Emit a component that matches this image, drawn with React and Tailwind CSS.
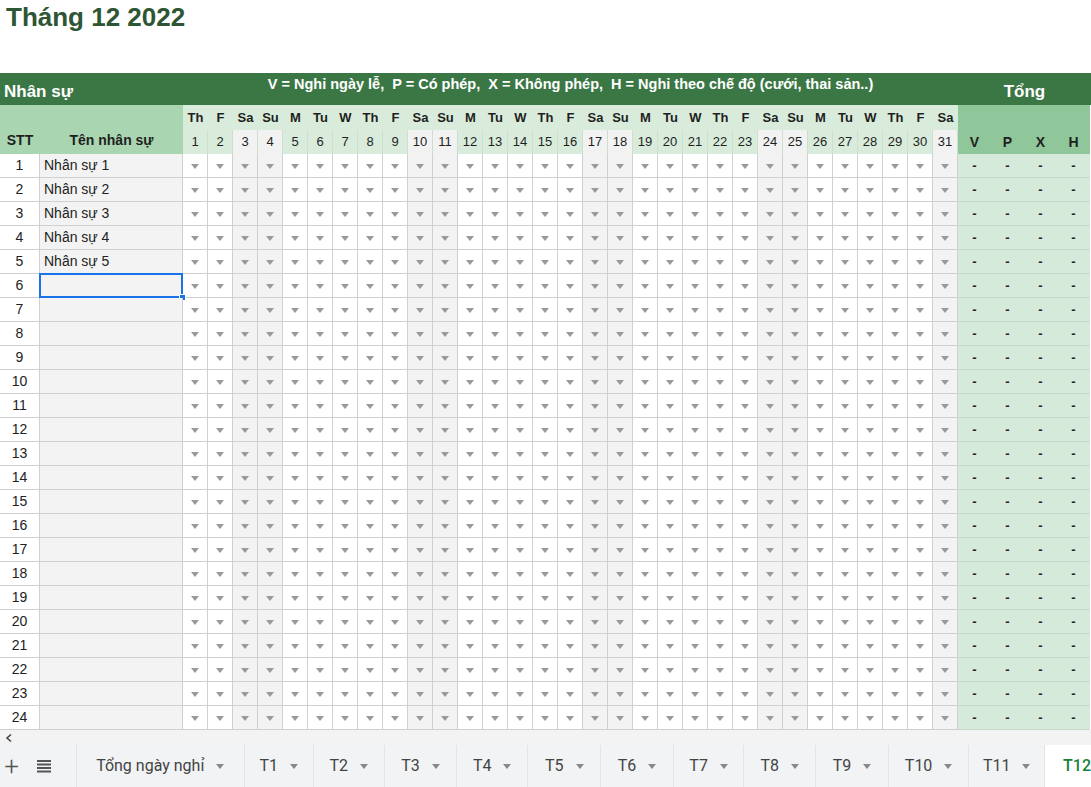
import React from 'react';

// Cấu hình lưới: STT | Tên | 31 ngày | V P X H
const GRID = 'grid grid-cols-[40px_143px_repeat(31,25px)_repeat(4,33px)]';

const DAY_NAMES = ['Th', 'F', 'Sa', 'Su', 'M', 'Tu', 'W'];
const days = Array.from({ length: 31 }, (_, i) => ({
    num: i + 1,
    name: DAY_NAMES[i % 7],
    weekend: i % 7 === 2 || i % 7 === 3,
}));

const names = ['Nhân sự 1', 'Nhân sự 2', 'Nhân sự 3', 'Nhân sự 4', 'Nhân sự 5'];

const tabs = [
    { label: 'Tổng ngày nghỉ', w: 'w-[169px]' },
    { label: 'T1', w: 'w-[69px]' },
    { label: 'T2', w: 'w-[72px]' },
    { label: 'T3', w: 'w-[72px]' },
    { label: 'T4', w: 'w-[72px]' },
    { label: 'T5', w: 'w-[73px]' },
    { label: 'T6', w: 'w-[73px]' },
    { label: 'T7', w: 'w-[71px]' },
    { label: 'T8', w: 'w-[72px]' },
    { label: 'T9', w: 'w-[73px]' },
    { label: 'T10', w: 'w-[81px]' },
    { label: 'T11', w: 'w-[76px]' },
];

const Arrow = ({ className = 'border-t-[#9a9a9a]' }) => (
    <span className={`block w-0 h-0 border-x-[4px] border-x-transparent border-t-[5px] ${className}`} />
);

const Header = () => (
    <div>
        {/* Hàng tiêu đề đậm */}
        <div className="flex h-[32px] bg-[#3b7745] text-white font-bold">
            <div className="w-[183px] flex items-end pl-[4px] pb-[1px] text-[17px]">Nhân sự</div>
            <div className="w-[775px] flex justify-center pt-[1px] text-[14.5px] whitespace-pre">
                V = Nghỉ ngày lễ,  P = Có phép,  X = Không phép,  H = Nghỉ theo chế độ (cưới, thai sản..)
            </div>
            <div className="flex-1 flex items-end justify-center pb-[1px] text-[17px]">Tổng</div>
        </div>

        <div className={`${GRID} grid-rows-[25px_24px] font-bold text-[14px] text-[#1f1f1f]`}>
            <div className="col-span-2 row-span-2 bg-[#a9d5b1] flex items-end pb-[3px]">
                <div className="w-[40px] text-center">STT</div>
                <div className="flex-1 text-center">Tên nhân sự</div>
            </div>
            {days.map((d) => (
                <div key={'n' + d.num} className="bg-[#d9ecdb] flex items-center justify-center text-[13px]">
                    {d.name}
                </div>
            ))}
            <div className="col-span-4 bg-[#8fc69a]" />
            {days.map((d) => (
                <div
                    key={'d' + d.num}
                    className={`flex items-center justify-center font-normal text-[13px] border-r border-[#cddfcd] ${d.weekend ? 'bg-[#f2f2f2]' : 'bg-[#d9ecdb]'}`}
                >
                    {d.num}
                </div>
            ))}
            {['V', 'P', 'X', 'H'].map((t) => (
                <div key={t} className="bg-[#8fc69a] flex items-center justify-center">{t}</div>
            ))}
        </div>
    </div>
);

const Row = ({ idx }) => {
    const selected = idx === 6;
    return (
        <div className={`${GRID} h-[24px] text-[14px] text-[#222]`}>
            <div className="flex items-center justify-center border-r border-b border-[#d0d0d0] bg-white">{idx}</div>
            <div className="relative flex items-center pl-[4px] border-r border-b border-[#d0d0d0] bg-[#f3f3f3]">
                {names[idx - 1] || ''}
                {selected && (
                    <>
                        <div className="absolute -left-[1px] -top-[1px] w-[144px] h-[25px] border-2 border-[#1a73e8]" />
                        <div className="absolute -right-[4px] -bottom-[4px] w-[7px] h-[7px] bg-[#1a73e8] border border-white" />
                    </>
                )}
            </div>
            {days.map((d) => (
                <div
                    key={d.num}
                    className={`flex items-center justify-center pt-[1px] border-r border-b border-[#d0d0d0] ${d.weekend ? 'bg-[#f3f3f3]' : 'bg-white'}`}
                >
                    <Arrow />
                </div>
            ))}
            {['V', 'P', 'X', 'H'].map((t) => (
                <div key={t} className="flex items-center justify-center bg-[#d5eada] border-b border-[#c4dbc7] text-[13px] font-bold">
                    -
                </div>
            ))}
        </div>
    );
};

const TabBar = () => (
    <div className="flex h-[42px] bg-[#f1f3f4] text-[16px] text-[#444] font-['Roboto',sans-serif]">
        <div className="w-[77px] flex items-center border-r border-[#e2e4e6]">
            <div className="w-[23px] flex justify-center text-[26px] font-light text-[#555] leading-none">+</div>
            <div className="w-[42px] flex justify-center">
                <svg width="16" height="14" viewBox="0 0 16 14" fill="#555">
                    <rect x="1" y="1" width="14" height="2" />
                    <rect x="1" y="4.5" width="14" height="2" />
                    <rect x="1" y="8" width="14" height="2" />
                    <rect x="1" y="11.5" width="14" height="2" />
                </svg>
            </div>
        </div>
        {tabs.map((t) => (
            <div key={t.label} className={`${t.w} flex items-center justify-center gap-[12px] border-r border-[#e2e4e6]`}>
                <span>{t.label}</span>
                <Arrow className="border-t-[#888]" />
            </div>
        ))}
        <div className="flex-1 bg-white flex items-center pl-[18px] text-[#188038] font-medium">T12</div>
    </div>
);

export default function App() {
    return (
        <div className="w-[1091px] h-[787px] overflow-hidden bg-white flex flex-col font-['Liberation_Sans',Arial,sans-serif]">
            {/* Tiêu đề tháng */}
            <div className="h-[73px] pl-[6px] text-[26px] font-bold text-[#2e5634] leading-[34px]">Tháng 12 2022</div>

            <Header />

            <div>
                {Array.from({ length: 24 }, (_, i) => (
                    <Row key={i} idx={i + 1} />
                ))}
            </div>

            {/* Thanh cuộn ngang */}
            <div className="h-[15px] bg-[#f3f3f3] flex items-center pl-[4px] text-[#444]">
                <svg width="10" height="10" viewBox="0 0 10 10" fill="none" stroke="#444" strokeWidth="1.6">
                    <path d="M7 1.5 L3 5 L7 8.5" />
                </svg>
            </div>

            <TabBar />
        </div>
    );
}
